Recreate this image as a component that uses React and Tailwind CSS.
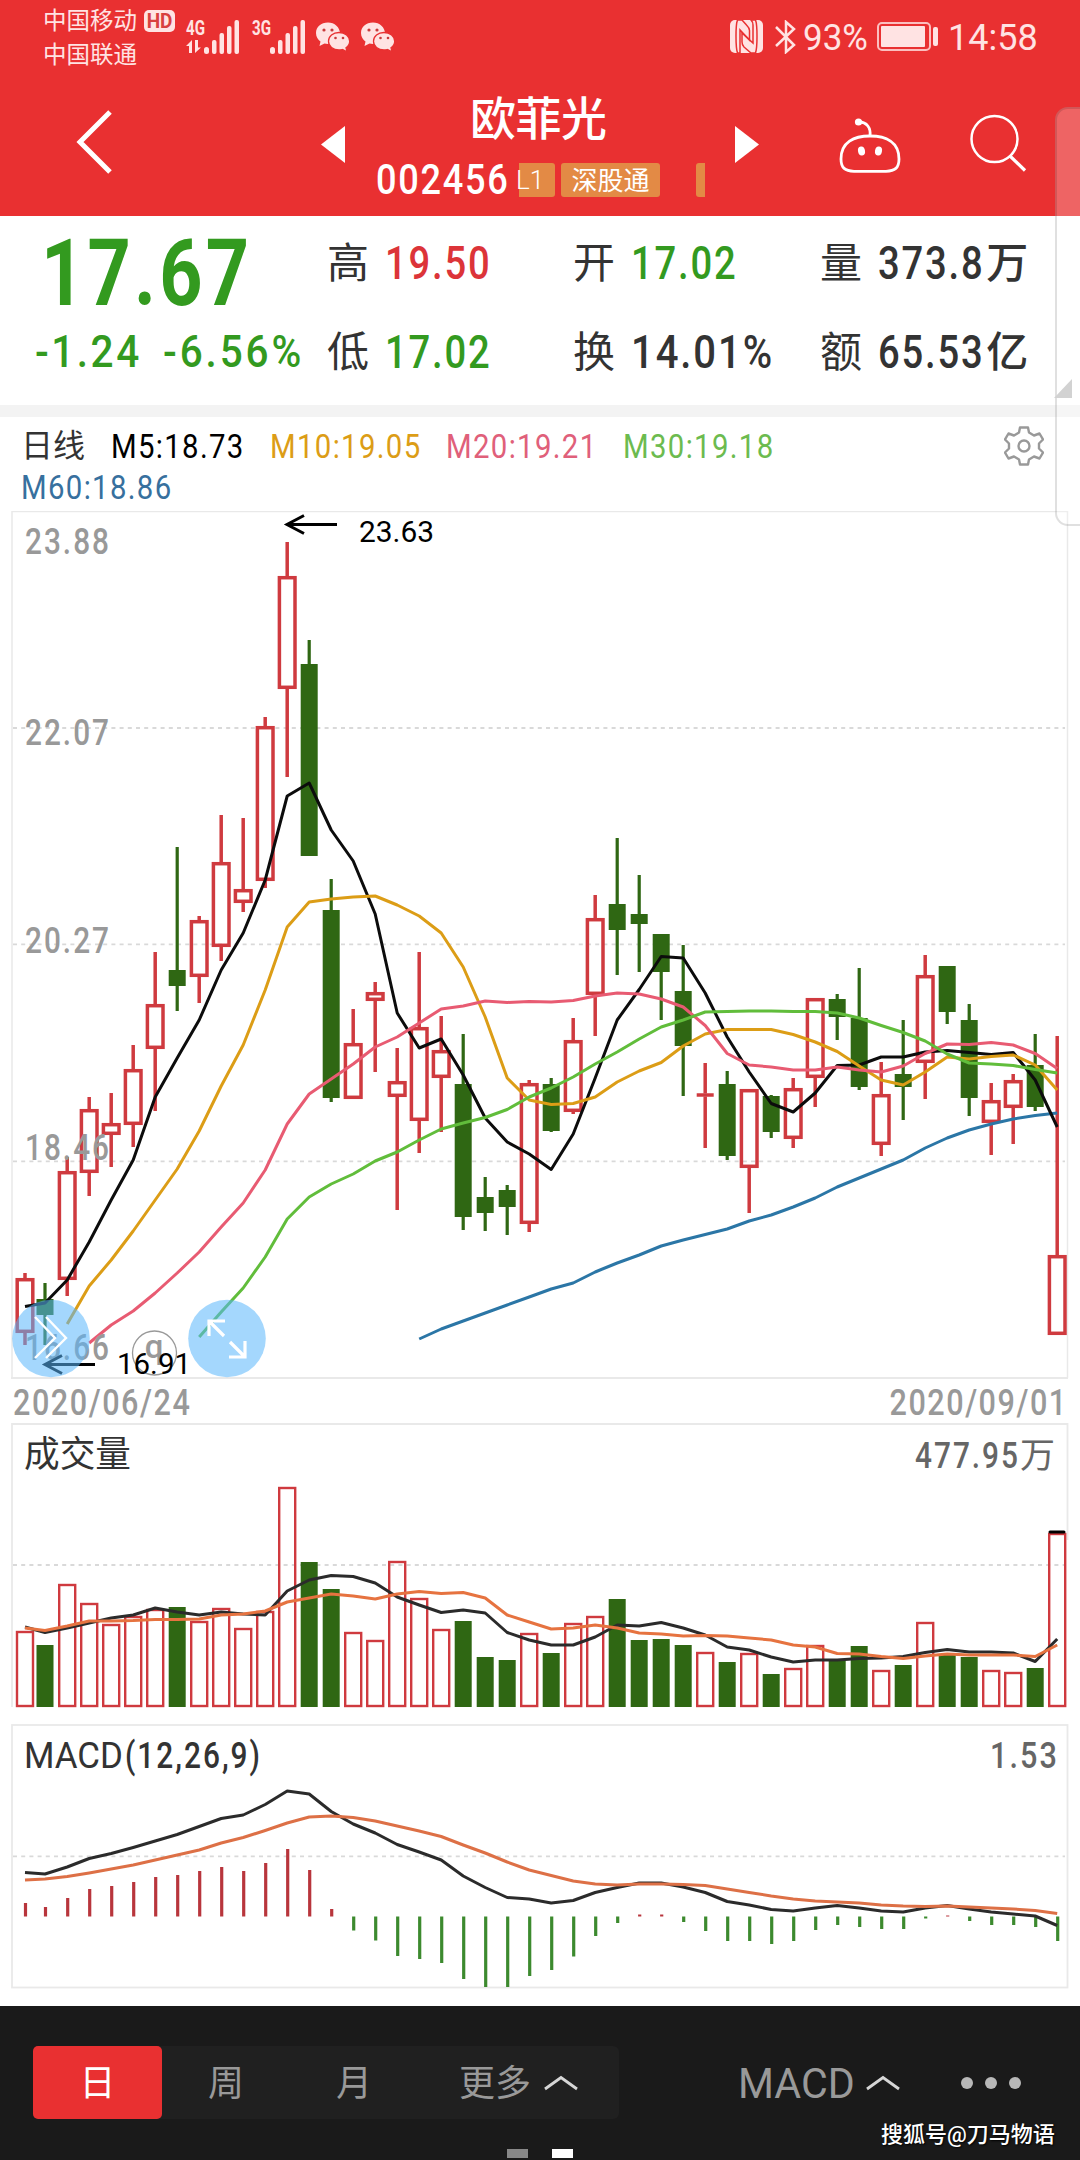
import { clsx } from 'clsx';

// [direction, high, body top, body bottom, low]
const candles = [
  ['u', 1273, 1278, 1333, 1345], ['d', 1283, 1299, 1315, 1345], ['u', 1157, 1171, 1280, 1296], ['u', 1097, 1109, 1173, 1196],
  ['u', 1093, 1123, 1135, 1167], ['u', 1045, 1069, 1125, 1147], ['u', 952, 1004, 1049, 1111], ['d', 847, 970, 986, 1011],
  ['u', 916, 920, 977, 1003], ['u', 815, 862, 947, 961], ['u', 818, 889, 903, 912], ['u', 717, 726, 881, 888],
  ['u', 542, 576, 689, 777], ['d', 640, 664, 856, 856], ['d', 879, 910, 1098, 1102], ['u', 1009, 1043, 1099, 1099],
  ['u', 982, 992, 1001, 1072], ['u', 1048, 1081, 1097, 1210], ['u', 952, 1027, 1121, 1153], ['u', 1016, 1050, 1078, 1132],
  ['d', 1034, 1084, 1217, 1230], ['d', 1177, 1197, 1213, 1231], ['d', 1185, 1190, 1207, 1235], ['u', 1080, 1083, 1224, 1232],
  ['d', 1078, 1084, 1131, 1132], ['u', 1018, 1040, 1112, 1114], ['u', 895, 918, 995, 1036], ['d', 838, 904, 930, 975],
  ['d', 875, 914, 924, 972], ['d', 934, 934, 972, 1020], ['d', 945, 991, 1046, 1096], ['u', 1063, 1093.5, 1096.5, 1148],
  ['d', 1071, 1084, 1156, 1160], ['u', 1089, 1089, 1168, 1213], ['d', 1095, 1096, 1132, 1138], ['u', 1078, 1088, 1139, 1148],
  ['u', 998, 998, 1078, 1107], ['d', 994, 999, 1017, 1040], ['d', 968, 1018, 1087, 1090], ['u', 1062, 1094, 1145, 1156],
  ['d', 1020, 1074, 1087, 1120], ['u', 955, 975, 1063, 1099], ['d', 966, 966, 1012, 1024], ['d', 1004, 1020, 1098, 1116],
  ['u', 1083, 1100, 1123, 1155], ['u', 1074, 1080, 1108, 1144], ['d', 1034, 1065, 1107, 1111], ['u', 1036, 1255, 1335, 1335],
];

const averages = [
  { color: '#2b76a6', start: 18, ys: [1339, 1329, 1321, 1313, 1305, 1297, 1289, 1283, 1272, 1263, 1255, 1246, 1240, 1234.5, 1229, 1221, 1215, 1207, 1198, 1187, 1178, 1169, 1160, 1148, 1138, 1130, 1124, 1119, 1115.5, 1113] },
  { color: '#0c0c0c', start: 0, ys: [1306.5, 1303, 1280, 1242, 1200, 1160, 1097, 1058, 1020, 970, 933, 880, 796, 783, 830, 861, 914, 1013, 1048, 1039, 1075, 1118, 1142, 1154, 1169.5, 1134, 1078, 1020, 989.5, 956.5, 958, 993, 1037, 1072, 1103.5, 1112, 1093, 1065.5, 1065, 1057, 1057, 1052, 1050.5, 1052.5, 1054.5, 1052.5, 1080, 1127] },
  { color: '#dc9d16', start: 2, ys: [1324, 1286, 1260, 1231, 1200, 1169, 1131, 1086, 1045, 990, 927, 902, 899, 897, 896, 905, 916, 933, 967, 1017, 1078, 1100, 1104.5, 1103.5, 1097, 1082, 1071, 1062.5, 1046, 1034, 1029.5, 1029.5, 1029.5, 1034.5, 1042, 1051.5, 1066, 1080, 1085, 1072, 1057, 1059, 1056.5, 1055, 1065, 1090] },
  { color: '#e85b72', start: 3, ys: [1343, 1325, 1311, 1293, 1273, 1252, 1227, 1203, 1170, 1124, 1094, 1079, 1064, 1047, 1037, 1023, 1009, 1006, 1001, 1002.5, 1001.5, 1002, 1000.5, 996, 993, 994, 999, 1007, 1025.5, 1053.5, 1065, 1067, 1070, 1070, 1067, 1070, 1072, 1066, 1053.5, 1044, 1044.5, 1042.5, 1045, 1053.5, 1068.5] },
  { color: '#61bd3b', start: 8, ys: [1337, 1312, 1288, 1257, 1219, 1197, 1184, 1174, 1161, 1152, 1140, 1129, 1123, 1117.5, 1109.5, 1097, 1088, 1077, 1064, 1052, 1039, 1027, 1020, 1012, 1011.5, 1011, 1011, 1011.5, 1011.5, 1013, 1018, 1025.5, 1032.5, 1041, 1054, 1063, 1064, 1065.5, 1069.5, 1073] },
];

const volumeTops = [1631, 1645, 1584, 1603, 1624, 1616, 1609, 1607, 1621, 1608, 1628, 1611, 1487, 1562, 1589, 1632, 1640, 1561, 1598, 1629, 1621, 1657, 1660, 1633, 1653, 1623, 1616, 1599, 1640, 1639, 1645, 1652, 1662, 1653, 1674, 1668, 1645, 1660, 1646, 1670, 1665, 1622, 1655, 1657, 1670, 1672, 1668, 1533];
const volumeMa5 = [1627, 1632.5, 1628, 1623, 1618, 1615, 1608, 1612, 1615, 1612, 1614, 1615, 1591, 1580, 1575.5, 1576.5, 1583, 1597, 1605, 1612.5, 1610, 1613, 1632.5, 1640, 1645, 1645, 1637, 1625, 1626, 1622.5, 1628, 1635, 1647, 1650, 1657, 1662, 1660, 1660, 1658.5, 1658, 1656.5, 1652.5, 1649.5, 1652, 1652, 1653, 1661.5, 1639];
const volumeMa10 = [1628, 1630.5, 1626, 1621, 1621, 1620.5, 1619.5, 1619.5, 1619, 1615, 1614, 1611, 1602, 1598, 1594, 1596, 1599, 1594, 1591.5, 1593.5, 1592.5, 1598, 1615, 1622, 1629, 1628, 1625, 1628, 1633, 1634, 1636, 1635.5, 1636, 1638, 1640, 1645, 1647, 1653.5, 1654, 1656.5, 1658.5, 1656, 1654, 1655, 1655, 1655, 1656.5, 1645];

const histogram = [1903, 1907, 1898, 1889, 1886, 1882, 1877, 1875, 1871, 1867, 1871, 1863, 1849, 1870, 1909, 1930.5, 1940.5, 1956, 1959, 1963, 1979, 1987, 1987, 1976, 1970, 1956.5, 1936, 1923, 1914.5, 1914.5, 1922, 1931, 1941, 1941, 1944, 1941, 1930, 1925, 1927, 1929, 1929, 1918.5, 1915.5, 1921, 1925, 1925, 1927, 1941];
const dif = [1872.5, 1874, 1867, 1858.5, 1853.5, 1847.5, 1841, 1834.5, 1826.5, 1818.5, 1815, 1804.5, 1791, 1794, 1811.5, 1824, 1833, 1844.5, 1852, 1860, 1876, 1887.5, 1897.5, 1899, 1903, 1900.5, 1892.5, 1887.5, 1883, 1883, 1887, 1892.5, 1901.5, 1905, 1909.5, 1911, 1908, 1905.5, 1908, 1911, 1912, 1908, 1905.5, 1909, 1912, 1914, 1916, 1925.5];
const dea = [1880, 1879, 1876.5, 1873, 1869, 1865, 1860, 1855, 1850, 1843, 1837.5, 1830.5, 1823, 1817, 1816, 1817.5, 1821, 1826, 1831, 1836.5, 1845, 1853, 1862, 1870, 1875.5, 1881, 1884, 1885, 1884, 1884, 1884.5, 1885.5, 1889, 1892.5, 1896, 1899, 1901, 1902, 1903, 1905, 1906, 1906.5, 1906, 1907, 1908, 1909, 1910.5, 1913.5];

const UP = '#cf3a3f';
const DOWN = '#2f6713';

const xAt = (i) => (i === 0 ? 25 : i === 1 ? 45 : 67.2 + 22 * (i - 2));

function Line({ ys, start = 0, color, width = 3 }) {
  const points = ys.map((y, i) => `${xAt(i + start)},${y}`).join(' ');
  return <polyline points={points} fill="none" stroke={color} strokeWidth={width} strokeLinejoin="round" />;
}

function Label({ x, y, w, size, color = '#999', weight = 500, spacing = 2.5, children }) {
  return (
    <text x={x} y={y} textLength={w} lengthAdjust="spacingAndGlyphs" letterSpacing={spacing} fontSize={size} fontWeight={weight} fill={color}>
      {children}
    </text>
  );
}

function GridLine({ y }) {
  return <line x1="13" x2="1065" y1={y} y2={y} stroke="#d9d9d9" strokeWidth="1.8" strokeDasharray="4 4.2" />;
}

function Arrow({ x, y }) {
  return <path d={`M${x + 51} ${y}H${x + 1}M${x + 18} ${y - 9}L${x + 1} ${y}l17 9`} fill="none" stroke="#000" strokeWidth="3" />;
}

function PriceChart() {
  return (
    <svg className="block h-[868px] w-full shrink-0" viewBox="0 511 1080 868">
      <path d="M12 1378V511.5H1067.5V1378" fill="none" stroke="#e9e9e9" strokeWidth="1.5" />
      <path d="M11 1378H1068" stroke="#e9e9e9" strokeWidth="2" />
      <GridLine y={728} />
      <GridLine y={944.3} />
      <GridLine y={1161.3} />
      {candles.map(([dir, high, top, bottom, low], i) => {
        const x = xAt(i);
        if (dir === 'd') {
          return (
            <g key={i} fill={DOWN}>
              <rect x={x - 1.6} y={high} width="3.2" height={low - high} />
              <rect x={x - 8.5} y={top} width="17" height={bottom - top} />
            </g>
          );
        }
        return (
          <g key={i} stroke={UP} strokeWidth="3.5">
            <path d={`M${x} ${high}V${top}M${x} ${bottom}V${low}`} />
            {bottom - top < 4 ? (
              <path d={`M${x - 8.5} ${(top + bottom) / 2}h17`} />
            ) : (
              <rect x={x - 7.8} y={top + 1.7} width="15.6" height={bottom - top - 3.4} fill="none" />
            )}
          </g>
        );
      })}
      {averages.map((line) => (
        <Line key={line.color} {...line} />
      ))}
      <Label x={25} y={554} w={86} size={37}>23.88</Label>
      <Label x={25} y={745} w={86} size={37}>22.07</Label>
      <Label x={25} y={953} w={86} size={37}>20.27</Label>
      <Label x={25} y={1160} w={86} size={37}>18.46</Label>
      <Label x={25} y={1359.5} w={86} size={37}>16.66</Label>
      <Arrow x={286} y={524.5} />
      <Label x={359} y={541.5} w={75} size={30} color="#000" weight={400} spacing={0}>23.63</Label>
      <circle cx="154.5" cy="1353" r="22" fill="#fff" fillOpacity="0.8" stroke="#999" strokeWidth="1.3" />
      <text x="154" y="1358" textAnchor="middle" fontSize="33" fontWeight="500" fill="#999">q</text>
      <Arrow x={44} y={1364.5} />
      <Label x={117} y={1374} w={74} size={30} color="#000" weight={400} spacing={0}>16.91</Label>
      <circle cx="51" cy="1338.5" r="38.8" fill="#59b7fb" fillOpacity="0.55" />
      <circle cx="227" cy="1338.5" r="38.8" fill="#59b7fb" fillOpacity="0.55" />
      <path d="M35 1317L55 1338L35 1358M46 1317L66 1338L46 1358" fill="none" stroke="#fff" strokeWidth="2.4" />
      <path d="M224 1336L209 1321M209 1336V1321H225M230 1342L245 1357M229 1357H245V1341" fill="none" stroke="#fff" strokeWidth="3.2" />
    </svg>
  );
}

function VolumeChart() {
  return (
    <svg className="block h-[301px] w-full shrink-0" viewBox="0 1423 1080 301">
      <path d="M12 1707V1424H1067.5V1540" fill="none" stroke="#e9e9e9" strokeWidth="1.8" />
      <GridLine y={1565} />
      {volumeTops.map((top, i) =>
        candles[i][0] === 'd' ? (
          <rect key={i} x={xAt(i) - 8.5} y={top} width="17" height={1707 - top} fill={DOWN} />
        ) : (
          <rect key={i} x={xAt(i) - 8} y={top + 1} width="16" height={1705 - top} fill="none" stroke={UP} strokeWidth="2.4" />
        )
      )}
      <path d="M1050 1532H1064" stroke="#000" strokeWidth="3" strokeLinecap="round" />
      <Line ys={volumeMa5} color="#2b2b2b" />
      <Line ys={volumeMa10} color="#e67340" />
      <Label x={24} y={1467} w={107} size={36} color="#333" weight={400} spacing={0}>成交量</Label>
      <Label x={915} y={1467.5} w={105} size={37} color="#666">477.95</Label>
      <text x="1020" y="1467.5" fontSize="35" fill="#666">万</text>
    </svg>
  );
}

function MacdChart() {
  return (
    <svg className="block h-[282px] w-full shrink-0" viewBox="0 1724 1080 282">
      <rect x="12" y="1725" width="1055.5" height="262.5" fill="none" stroke="#e9e9e9" strokeWidth="1.8" />
      <GridLine y={1856.3} />
      {histogram.map((y, i) => (
        <line key={i} x1={xAt(i) + 0.5} x2={xAt(i) + 0.5} y1={1916.5} y2={y} stroke={y < 1916 ? '#b8353c' : '#3c8a2e'} strokeWidth="3.2" />
      ))}
      <Line ys={dif} color="#2b2b2b" />
      <Line ys={dea} color="#dd7046" />
      <Label x={24} y={1768} w={99} size={37} color="#333" weight={400} spacing={0}>MACD</Label>
      <Label x={125} y={1768} w={137} size={37} color="#333">(12,26,9)</Label>
      <Label x={990} y={1768} w={69} size={37} color="#666">1.53</Label>
    </svg>
  );
}

function Signal({ label, arrows }) {
  return (
    <svg className="h-9 w-[54px] overflow-visible" viewBox="0 0 54 36" fill="#ffe3e3">
      <text x="0" y="15.5" fontSize="20" fontWeight="700" textLength="19" lengthAdjust="spacingAndGlyphs">{label}</text>
      {arrows && <path d="M0 27l6-6v13H3v-7zM9 21v13l6-5.500h-3V21z" />}
      <rect x="18" y="28" width="5" height="7" rx="2.5" />
      <rect x="26" y="21" width="4.5" height="14" rx="2" />
      <rect x="33.500" y="14" width="4.5" height="21" rx="2" />
      <rect x="41" y="7" width="4.5" height="28" rx="2" />
      <rect x="48.500" y="1" width="4.5" height="34" rx="2" />
    </svg>
  );
}

function WeChat() {
  return (
    <svg className="h-[30px] w-[34px]" viewBox="0 0 34 30">
      <path d="M12 0.500C5 .5 0 5 0 11c0 4 2 6.500 4.500 8.500L3.500 24l5-2.500c1 .3 2 .4 3.500.4 6.500 0 12-4.500 12-10.500S18.500.5 12 .5z" fill="#ffe3e3" />
      <path d="M23 10.500c-6 0-10.500 4-10.500 8.800S17 28 23 28c1.200 0 2.500-.2 3.500-.5l4.500 2.300-1-4c2.300-1.700 3.700-3.800 3.700-6.500 0-4.800-4.700-8.800-10.700-8.800z" fill="#ffe3e3" stroke="#e93031" strokeWidth="1.300" />
      <g fill="#c93a3b">
        <circle cx="8" cy="8" r="1.600" /><circle cx="16" cy="8" r="1.600" />
        <circle cx="19.500" cy="16" r="1.300" /><circle cx="27" cy="16" r="1.300" />
      </g>
    </svg>
  );
}

function StatusBar() {
  return (
    <div className="flex h-[76px] items-start text-[#ffe3e3]">
      <div className="ml-[43px] mt-[4px] w-[96px] text-[23.5px] leading-[34px] whitespace-nowrap">
        <p>中国移动</p>
        <p>中国联通</p>
      </div>
      <div className="ml-[5px] mt-[10px] grid h-[22px] w-[31px] place-items-center rounded-[5px] bg-[#ffe3e3] text-[20px] leading-[22px] font-bold text-[#d8403f]">
        <span className="scale-x-95">HD</span>
      </div>
      <div className="ml-[11px] mt-[19px]"><Signal label="4G" arrows /></div>
      <div className="ml-[12px] mt-[19px]"><Signal label="3G" /></div>
      <div className="ml-[10px] mt-[22px]"><WeChat /></div>
      <div className="ml-[11px] mt-[22px]"><WeChat /></div>
      <svg className="ml-[335px] mt-[20px] h-[33px] w-[33px]" viewBox="0 0 33 33">
        <rect width="33" height="33" rx="5" fill="#ffe3e3" />
        <path d="M7.500 0C5.500 5 5.500 27 7.500 33H10V10L19.500 20V10.500C19.500 8 18 6.500 16.500 5L12 0z" fill="none" stroke="#e93031" strokeWidth="1.500" />
        <path d="M25.500 0C27.500 5 27.500 27 25.500 33H21L14 27C12.500 25.500 12 24 12 22V13L23 23V5C23 2.500 22 1 21 0z" fill="none" stroke="#e93031" strokeWidth="1.500" />
      </svg>
      <svg className="ml-[12px] mt-[20px] h-[34px] w-[21px]" viewBox="0 0 21 34" fill="none" stroke="#ffe3e3" strokeWidth="2.500">
        <path d="M1 7l18 18-8 7V2l8 7L1 26" />
      </svg>
      <span className="ml-[7px] mt-[17px] w-[67px] origin-left scale-x-[.97] text-[36px] leading-[42px]">93%</span>
      <div className="ml-[7px] mt-[22px] h-[29px] w-[54px] rounded-[5px] border-2 border-[#ffe3e3]/80 p-[2px]">
        <div className="h-full w-[44px] rounded-[1px] bg-[#ffe3e3]" />
      </div>
      <div className="ml-[2px] mt-[27px] h-[19px] w-[5px] rounded-[2px] bg-[#ffe3e3]" />
      <span className="ml-[10px] mt-[17px] text-[36px] leading-[42px]">14:58</span>
    </div>
  );
}

function Header() {
  return (
    <header className="h-[216px] shrink-0 bg-[#e93031]">
      <StatusBar />
      <div className="flex h-[140px] items-start text-white">
        <svg className="ml-[76px] mt-[34px] h-[64px] w-[38px]" viewBox="0 0 38 64">
          <path d="M34 2L4 32L34 62" fill="none" stroke="#fff" strokeWidth="5" />
        </svg>
        <svg className="ml-[207px] mt-[50px] h-[37px] w-[24px]" viewBox="0 0 24 37">
          <path d="M24 0V37L0 18.500z" fill="#fff" />
        </svg>
        <div className="ml-[31px] flex w-[329px] flex-col items-start">
          <h1 className="ml-[94px] mt-[15px] text-[46px] leading-[56px] font-medium tracking-[-0.5px]">欧菲光</h1>
          <div className="mt-[16px] flex h-[34px] items-center">
            <span className="w-[143px] origin-left scale-x-[.86] text-[42px] leading-[34px] font-medium tracking-[2px]">002456</span>
            <span className="flex h-[34px] w-[36px] items-center rounded-r-[3px] bg-[#e38a45] text-[26px] leading-none font-light">
              <span className="-ml-[3px]">L1</span>
            </span>
            <span className="ml-[6px] grid h-[34px] w-[99px] place-items-center rounded-[3px] bg-[#e38a45] pt-[1px] text-[26px] leading-none">深股通</span>
            <span className="ml-[36px] h-[34px] w-[9px] rounded-l-[3px] bg-[#e38a45]" />
          </div>
        </div>
        <svg className="ml-[30px] mt-[50px] h-[37px] w-[24px]" viewBox="0 0 24 37">
          <path d="M0 0V37L24 18.500z" fill="#fff" />
        </svg>
        <svg className="ml-[80px] mt-[41px] h-[56px] w-[62px]" viewBox="0 0 62 56" fill="none" stroke="#fff" strokeWidth="2.800">
          <path d="M31 19C15 19 2 25 2 42c0 9 4 12 13 12.300h32c9-.3 13-3.300 13-12.300C60 25 47 19 31 19z" />
          <path d="M31 19C32 11 28 5 20 5" />
          <circle cx="19.500" cy="5" r="3.600" fill="#fff" stroke="none" />
          <ellipse cx="22.500" cy="34" rx="3.500" ry="4.500" fill="#fff" stroke="none" transform="rotate(-10 22.500 34)" />
          <ellipse cx="39.500" cy="34" rx="3.500" ry="4.500" fill="#fff" stroke="none" transform="rotate(10 39.500 34)" />
        </svg>
        <svg className="ml-[68px] mt-[38px] h-[60px] w-[60px]" viewBox="0 0 60 60" fill="none" stroke="#fff" strokeWidth="2.500">
          <circle cx="25.500" cy="25" r="23" />
          <path d="M41 42L56 56.500" strokeWidth="3.200" />
        </svg>
      </div>
    </header>
  );
}

function Stat({ label, value, unit, className }) {
  return (
    <div className="flex h-[89px] items-center whitespace-nowrap">
      <span className="w-[58px] text-[42px] text-[#333]">{label}</span>
      <span className={clsx('origin-left text-[46px] font-medium tracking-[2.2px]', value.endsWith('%') ? 'scale-x-[.87]' : 'scale-x-[.83]', className)}>{value}</span>
      {unit && <span className="-ml-[20px] text-[42px] font-medium text-[#333]">{unit}</span>}
    </div>
  );
}

function Quote() {
  return (
    <section className="flex h-[189px] shrink-0 bg-white">
      <div className="w-[327px] text-[#339a1f]">
        <p className="ml-[41px] mt-[10px] origin-left scale-x-[.82] text-[92px] leading-[96px] font-bold tracking-[4px]">17.67</p>
        <div className="ml-[35px] mt-[4px] flex text-[45px] leading-[52px] font-medium whitespace-nowrap">
          <span className="w-[128px] origin-left scale-x-[.9] tracking-[2.8px]">-1.24</span>
          <span className="origin-left scale-x-[.9] tracking-[3.2px]">-6.56%</span>
        </div>
      </div>
      <div className="mt-[3px] w-[246px]">
        <Stat label="高" value="19.50" className="text-[#dc3439]" />
        <Stat label="低" value="17.02" className="text-[#339a1f]" />
      </div>
      <div className="mt-[3px] w-[247px]">
        <Stat label="开" value="17.02" className="text-[#339a1f]" />
        <Stat label="换" value="14.01%" className="text-[#333]" />
      </div>
      <div className="mt-[3px] w-[240px]">
        <Stat label="量" value="373.8" unit="万" className="text-[#333]" />
        <Stat label="额" value="65.53" unit="亿" className="text-[#333]" />
      </div>
    </section>
  );
}

function Legend() {
  return (
    <section className="relative h-[94px] shrink-0 text-[33px] leading-[41px] whitespace-nowrap">
      <div className="flex pt-[9px]">
        <span className="ml-[21px] w-[90px] text-[32px] text-[#333]">日线</span>
        <span className="w-[159px] origin-left scale-x-[.89] tracking-[1.5px] text-black">M5:18.73</span>
        <span className="w-[176px] origin-left scale-x-[.89] tracking-[1.5px] text-[#dc9d16]">M10:19.05</span>
        <span className="w-[177px] origin-left scale-x-[.89] tracking-[1.5px] text-[#e0607a]">M20:19.21</span>
        <span className="w-[176px] origin-left scale-x-[.89] tracking-[1.5px] text-[#6cbb4f]">M30:19.18</span>
      </div>
      <p className="ml-[21px] w-[176px] origin-left scale-x-[.89] tracking-[1.5px] text-[#37709e]">M60:18.86</p>
      <svg className="absolute top-[9px] left-[1004px] h-[40px] w-[40px]" viewBox="0 0 40 40" fill="none" stroke="#999" strokeWidth="2.400" strokeLinejoin="round">
        <path d="M16 1.500h8l1 5 5 3 5.500-2 3.500 6-4 4v5l4 4-3.500 6-5.500-2-5 3-1 5h-8l-1-5-5-3-5.500 2-3.500-6 4-4v-5l-4-4 3.500-6 5.500 2 5-3z" />
        <circle cx="20" cy="20" r="5.500" />
      </svg>
    </section>
  );
}

function Caret({ className }) {
  return (
    <svg className={clsx('h-[16px] w-[36px]', className)} viewBox="0 0 36 16">
      <path d="M2 14L18 2.500L34 14" fill="none" stroke="#d6d6d6" strokeWidth="2.800" />
    </svg>
  );
}

function BottomBar() {
  return (
    <footer className="relative h-[154px] shrink-0 bg-[#1a1a1a]">
      <div className="flex items-center pt-[40px] text-[36px] text-[#999]">
        <div className="ml-[33px] flex h-[73px] w-[586px] items-center rounded-[6px] bg-[#202020]">
          <span className="grid h-[73px] w-[129px] place-items-center rounded-[5px] bg-[#e93031] pt-[2px] text-white">日</span>
          <span className="w-[128px] pt-[2px] text-center">周</span>
          <span className="w-[128px] pt-[2px] text-center">月</span>
          <span className="ml-[41px] w-[84px] pt-[2px]">更多</span>
          <Caret />
        </div>
        <span className="ml-[119px] w-[127px] origin-left scale-x-[.98] pt-[2px] text-[42px]">MACD</span>
        <Caret />
        <div className="ml-[60px] flex gap-[12px]">
          <i className="size-[12px] rounded-full bg-[#b8b8b8]" />
          <i className="size-[12px] rounded-full bg-[#b8b8b8]" />
          <i className="size-[12px] rounded-full bg-[#b8b8b8]" />
        </div>
      </div>
      <i className="absolute top-[143px] left-[507px] h-[9px] w-[21px] bg-[#888]" />
      <i className="absolute top-[143px] left-[552px] h-[9px] w-[21px] bg-white" />
      <p className="absolute top-[113px] left-[881px] text-[22px] leading-[32px] font-medium whitespace-nowrap text-white [text-shadow:1px_1px_2px_#000]">搜狐号@刀马物语</p>
    </footer>
  );
}

export default function App() {
  return (
    <div className="relative flex h-[2160px] w-[1080px] flex-col overflow-hidden bg-white font-[Roboto,'Noto_Sans_CJK_SC',sans-serif]">
      <Header />
      <Quote />
      <div className="h-[12px] shrink-0 bg-[#f3f3f3]" />
      <Legend />
      <PriceChart />
      <div className="flex h-[44px] shrink-0 items-center justify-between pt-[3px] pr-[12px] pl-[13px] text-[36px] font-medium tracking-[1.8px] text-[#999]">
        <span className="origin-left scale-x-[.85]">2020/06/24</span>
        <span className="origin-right scale-x-[.85]">2020/09/01</span>
      </div>
      <VolumeChart />
      <MacdChart />
      <BottomBar />

      {/* edge panel peeking in from the right */}
      <div className="absolute top-[107px] left-[1055px] h-[419px] w-[40px] rounded-[13px] border-2 border-black/12 bg-white/25" />
      <svg className="absolute top-[379px] left-[1054px] h-[19px] w-[18px]" viewBox="0 0 18 19">
        <path d="M18 0V19H0z" fill="#d2d2d2" />
      </svg>
    </div>
  );
}
